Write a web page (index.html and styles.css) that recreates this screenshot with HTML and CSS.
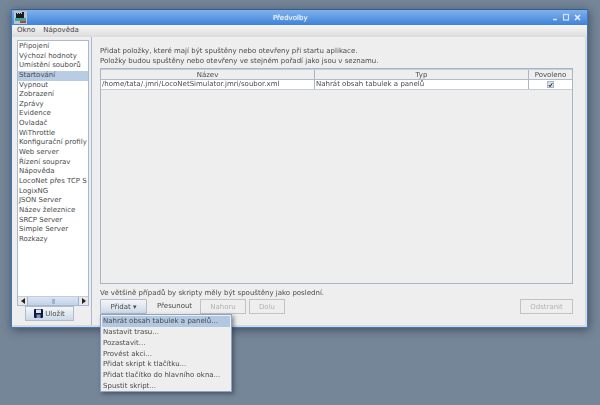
FILE: index.html
```html
<!DOCTYPE html>
<html lang="cs">
<head>
<meta charset="utf-8">
<title>Předvolby</title>
<link rel="stylesheet" href="styles.css">
</head>
<body>
<div class="window">
  <div class="titlebar">
    <svg class="appicon" width="13" height="13" viewBox="0 0 13 13"><rect width="13" height="13" fill="#b9c6cf"/><path d="M2 2h1v1h1V2h1v1h1V2h1v1h1V1h2v6H2z" fill="#1c1c24"/><rect x="1" y="7" width="11" height="3" fill="#3fa79a"/><rect x="6" y="10" width="6" height="2" fill="#b8404a"/></svg>
    <span class="title">Předvolby</span>
    <div class="winbtns">
      <svg width="32" height="9" viewBox="0 0 32 9"><path d="M1 6.5h4" stroke="#d5e4f7" stroke-width="1.5"/><rect x="11.5" y="1.5" width="5" height="5.5" fill="none" stroke="#d5e4f7" stroke-width="1.2"/><path d="M23 2l5 5M28 2l-5 5" stroke="#e6effa" stroke-width="1.6"/></svg>
    </div>
  </div>
  <div class="menubar"><span>Okno</span><span>Nápověda</span></div>
  <div class="main">
    <div class="side">
      <div class="listbox">
        <ul class="list">
          <li>Připojení</li><li>Výchozí hodnoty</li><li>Umístění souborů</li><li class="sel">Startování</li><li>Vypnout</li><li>Zobrazení</li><li>Zprávy</li><li>Evidence</li><li>Ovladač</li><li>WiThrottle</li><li>Konfigurační profily</li><li>Web server</li><li>Řízení souprav</li><li>Nápověda</li><li>LocoNet přes TCP S</li><li>LogixNG</li><li>JSON Server</li><li>Název železnice</li><li>SRCP Server</li><li>Simple Server</li><li>Rozkazy</li>
        </ul>
        <div class="hscroll">
          <span class="arrowbtn"><svg width="4" height="6" viewBox="0 0 4 6"><path d="M4 0v6L0 3z" fill="#222"/></svg></span>
          <span class="track"><span class="thumb"></span></span>
          <span class="arrowbtn"><svg width="4" height="6" viewBox="0 0 4 6"><path d="M0 0v6l4-3z" fill="#222"/></svg></span>
        </div>
      </div>
      <button class="btn save"><svg width="9" height="9" viewBox="0 0 9 9"><rect width="9" height="9" rx="1" fill="#10183c"/><rect x="2" y="0.5" width="5" height="3.5" fill="#dfe6f0"/><rect x="2.5" y="5.5" width="4" height="3.5" fill="#7d93c0"/></svg>Uložit</button>
    </div>
    <div class="content">
      <p class="intro">Přidat položky, které mají být spuštěny nebo otevřeny při startu aplikace.<br>Položky budou spuštěny nebo otevřeny ve stejném pořadí jako jsou v seznamu.</p>
      <div class="tablewrap">
        <div class="row head"><div class="c1">Název</div><div class="c2">Typ</div><div class="c3">Povoleno</div></div>
        <div class="row data"><div class="c1">/home/tata/.jmri/LocoNetSimulator.jmri/soubor.xml</div><div class="c2">Nahrát obsah tabulek a panelů</div><div class="c3"><span class="check"><svg width="6" height="6" viewBox="0 0 6 6"><path d="M1 3l1.5 2L5 1" fill="none" stroke="#222" stroke-width="1.2"/></svg></span></div></div>
      </div>
      <p class="note">Ve většině případů by skripty měly být spouštěny jako poslední.</p>
      <div class="actions">
        <div class="dropdown">
          <button class="btn add">Přidat ▾</button>
          <ul class="menu">
            <li class="hl">Nahrát obsah tabulek a panelů...</li><li>Nastavit trasu...</li><li>Pozastavit...</li><li>Provést akci...</li><li>Přidat skript k tlačítku...</li><li>Přidat tlačítko do hlavního okna...</li><li>Spustit skript...</li>
          </ul>
        </div>
        <span class="plain">Přesunout</span>
        <button class="btn off up">Nahoru</button>
        <button class="btn off down">Dolu</button>
        <button class="btn off remove">Odstranit</button>
      </div>
    </div>
  </div>
</div>
</body>
</html>
```
FILE: styles.css
```css
* { box-sizing: border-box; }
html, body { margin: 0; height: 405px; overflow: hidden; }
body {
  background: #758698;
  font: 7px/10px "DejaVu Sans", sans-serif;
  color: #4a4a4a;
  padding: 9px 0 0 11px;
  filter: blur(0.3px);
}
.window {
  width: 577px;
  height: 319px;
  border: 1px solid #3b78c6;
  border-top-color: #33608f;
  background: #eee;
  box-shadow: 1px 2px 9px rgba(30, 40, 55, .6);
  display: flex;
  flex-direction: column;
}
.titlebar {
  height: 15px;
  flex: none;
  background: linear-gradient(#80b2ec, #3f82da);
  display: flex;
  align-items: center;
  position: relative;
  padding-left: 2px;
  color: #e6f0fb;
  font-weight: bold;
}
.title { position: absolute; left: 261px; top: 3px; font-weight: normal; text-shadow: 0 0 1px #e6f0fb; }
.winbtns { margin-left: auto; height: 9px; margin-right: 3px; }
.winbtns svg { display: block; }
.menubar {
  height: 12px;
  flex: none;
  background: linear-gradient(#f6f6f6, #dcdcdc);
  display: flex;
  gap: 8px;
  padding: 0 0 0 5px;
  color: #444;
}
.main { flex: 1; display: flex; min-height: 0; border: solid #d8d8d8; border-width: 0 2px 2px 0; }
.side {
  width: 80px;
  flex: none;
  padding: 3px 2px 0 5px;
  border-right: 1px solid #a9b9d2;
}
.listbox {
  height: 266px;
  width: 72px;
  border: 1px solid #a9b9d2;
  background: #fff;
  display: flex;
  flex-direction: column;
  overflow: hidden;
}
.list { list-style: none; margin: 0; padding: 1px 0 0; flex: 1; overflow: hidden; }
.list li { height: 9.65px; line-height: 9.65px; padding-left: 1px; white-space: nowrap; }
.list .sel { background: #b8cde3; }
.hscroll { height: 9px; flex: none; display: flex; border-top: 1px solid #c4cdd8; background: #e4e7ec; }
.arrowbtn { width: 9px; flex: none; display: flex; align-items: center; justify-content: center; background: #e8e8e8; }
.track { flex: 1; display: flex; justify-content: center; align-items: center; background: linear-gradient(#d9e5f3, #c2d3e8); border: 1px solid #a0b2c9; border-width: 0 1px; }
.thumb { width: 3px; height: 5px; background: #9fb4d2; }
.btn {
  font: inherit;
  color: #4a4a4a;
  height: 15px;
  padding: 0;
  border: 1px solid #b0bccc;
  background: linear-gradient(#f4f6f9, #cdd9e7);
  display: flex;
  align-items: center;
  justify-content: center;
}
.save { width: 49px; margin: 0 0 0 8px; gap: 2px; }
.content { flex: 1; display: flex; flex-direction: column; padding: 0 12px 0 8px; min-width: 0; }
.intro { margin: 10px 0 0; height: 21px; line-height: 9.7px; white-space: nowrap; }
.tablewrap {
  height: 216px;
  width: 473px;
  border: 1px solid #a9b5c4;
  flex: none;
}
.row { display: grid; grid-template-columns: 213px 214px 1fr; white-space: nowrap; }
.row > div { overflow: hidden; }
.head { height: 11px; border-bottom: 1px solid #b0bccb; background: #eee; text-align: center; line-height: 10px; border-top: 1px solid #c6ced8; }
.head .c2, .head .c3, .data .c2, .data .c3 { border-left: 1px solid #a9b5c4; }
.data { height: 10px; background: #fff; border-bottom: 1px solid #c6ced8; line-height: 9px; }
.data .c1 { padding-left: 1px; }
.data .c2 { padding-left: 1px; }
.data .c3 { display: flex; justify-content: center; align-items: center; }
.check { width: 7px; height: 7px; background: #d5deea; border: 1px solid #aab6c6; display: flex; align-items: center; justify-content: center; }
.note { margin: 4px 0 0; height: 11px; line-height: 10px; white-space: nowrap; }
.actions { display: flex; align-items: flex-start; height: 15px; position: relative; }
.actions .btn { padding-top: 1px; }
.dropdown { position: relative; }
.add { width: 47px; border-radius: 1px; }
.plain { margin-left: 10px; width: 43px; line-height: 15px; }
.off { color: #b2b2b2; background: #eee; border-color: #c2c2c2; }
.up { width: 46px; }
.down { width: 36px; margin-left: 3px; }
.remove { width: 53px; margin-left: auto; margin-right: 0; }
.menu {
  position: absolute;
  left: 0;
  top: 15px;
  width: 132px;
  height: 78px;
  margin: 0;
  padding: 1px 1px 0;
  list-style: none;
  background: #eee;
  border: 1px solid #8ea4c4;
  box-shadow: 2px 2px 4px rgba(30, 40, 55, .5);
  white-space: nowrap;
}
.menu li { height: 10.85px; line-height: 11px; padding-left: 1px; }
.menu .hl { background: #b2c8e0; }
```
